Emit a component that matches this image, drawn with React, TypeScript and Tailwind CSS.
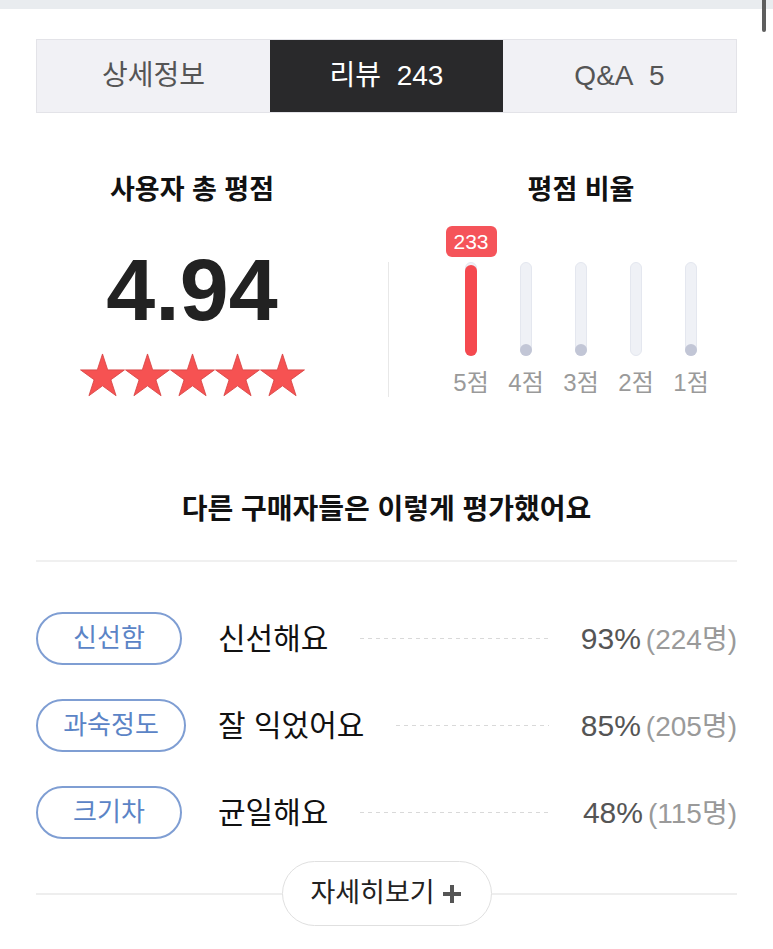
import React from "react";

const FONT = { fontFamily: '"Liberation Sans", "Noto Sans CJK KR", sans-serif' };

function Star() {
  return (
    <svg width="45" height="45" viewBox="0.3 0.3 23.4 23.4">
      <polygon
        points="12,0.8 14.69,9.09 23.41,9.09 16.36,14.22 19.05,22.51 12,17.38 4.95,22.51 7.64,14.22 0.59,9.09 9.31,9.09"
        fill="#f65252"
        stroke="#d84444"
        strokeWidth="0.45"
        strokeLinejoin="round"
      />
    </svg>
  );
}

const bars = [
  { label: "5점", count: 233, active: true, dot: false },
  { label: "4점", count: 5, active: false, dot: true },
  { label: "3점", count: 3, active: false, dot: true },
  { label: "2점", count: 0, active: false, dot: false },
  { label: "1점", count: 2, active: false, dot: true },
];

const rows = [
  { tag: "신선함", text: "신선해요", pct: "93%", n: "(224명)", wide: false },
  { tag: "과숙정도", text: "잘 익었어요", pct: "85%", n: "(205명)", wide: true },
  { tag: "크기차", text: "균일해요", pct: "48%", n: "(115명)", wide: false },
];

export default function App() {
  return (
    <div className="relative w-[773px] h-[949px] overflow-hidden bg-white" style={FONT}>
      <div className="h-[9px] bg-[#e9ecef]" />
      <div className="absolute right-[7px] top-0 w-[4px] h-[32px] rounded-b-full bg-[#5e5e5e]" />

      <div className="px-[36px]">
        {/* Tabs */}
        <div className="mt-[30px] flex h-[74px] border border-[#e3e3e8]">
          <div className="flex flex-1 items-center justify-center bg-[#f1f1f5] text-[28px] text-[#555]">
            상세정보
          </div>
          <div className="flex flex-1 items-center justify-center bg-[#29292b] text-[28px] text-white">
            리뷰&nbsp;&nbsp;243
          </div>
          <div className="flex flex-1 items-center justify-center bg-[#f1f1f5] text-[28px] text-[#555]">
            Q&amp;A&nbsp;&nbsp;5
          </div>
        </div>

        {/* Rating summary */}
        <div className="mt-[62px] flex">
          <div className="flex w-[312px] flex-col items-center">
            <div className="text-[27px] font-bold leading-[30px] text-[#111]">사용자 총 평점</div>
            <div className="mt-[41px] text-[88px] font-bold leading-none text-[#222]">4.94</div>
            <div className="mt-[19px] flex">
              <Star />
              <Star />
              <Star />
              <Star />
              <Star />
            </div>
          </div>
          <div className="ml-[40px] mt-[87px] h-[135px] w-px bg-[#e8e8e8]" />
          <div className="flex flex-1 flex-col items-center pl-[36px]">
            <div className="text-[27px] font-bold leading-[30px] text-[#111]">평점 비율</div>
            <div className="mt-[21px] flex">
              {bars.map((b) => (
                <div key={b.label} className="flex w-[55px] flex-col items-center">
                  {b.active ? (
                    <div className="flex h-[31px] w-[51px] items-center justify-center rounded-[6px] bg-[#f5545a] text-[21px] text-white">
                      {b.count}
                    </div>
                  ) : (
                    <div className="h-[31px]" />
                  )}
                  <div className="relative mt-[5px] h-[94px] w-[12px] rounded-full border border-[#e4e7ef] bg-[#eff1f6]">
                    {b.active && (
                      <div className="absolute inset-x-[-1px] bottom-[-1px] top-[2px] rounded-full bg-[#f5494f]" />
                    )}
                    {b.dot && (
                      <div className="absolute bottom-[-1px] left-[-1px] h-[12px] w-[12px] rounded-full bg-[#c2c6d6]" />
                    )}
                  </div>
                  <div className="mt-[14px] text-[24px] leading-[26px] text-[#9a9a9a]">{b.label}</div>
                </div>
              ))}
            </div>
          </div>
        </div>

        {/* Others' evaluation */}
        <div className="mt-[94px] text-center text-[28px] font-bold leading-[36px] text-[#111]">
          다른 구매자들은 이렇게 평가했어요
        </div>
        <div className="mt-[32px] h-[2px] bg-[#f0f0f0]" />

        <div className="mt-[50px] flex flex-col gap-[34px]">
          {rows.map((r) => (
            <div key={r.tag} className="flex h-[53px] items-center">
              <div className="w-[182px] shrink-0">
                <div
                  className={
                    r.wide
                      ? "flex h-[53px] w-[150px] items-center justify-center rounded-full border-2 border-[#7f9ed3] text-[26px] text-[#5b84c6]"
                      : "flex h-[53px] w-[146px] items-center justify-center rounded-full border-2 border-[#7f9ed3] text-[26px] text-[#5b84c6]"
                  }
                >
                  {r.tag}
                </div>
              </div>
              <div className="text-[30px] text-[#111]">{r.text}</div>
              <div className="mx-[32px] h-px flex-1 bg-[repeating-linear-gradient(to_right,#d9d9d9_0_4px,transparent_4px_8px)]" />
              <div className="flex items-baseline">
                <span className="text-[30px] text-[#555]">{r.pct}</span>
                <span className="ml-[5px] text-[28px] text-[#9a9a9a]">{r.n}</span>
              </div>
            </div>
          ))}
        </div>

        <div className="mt-[22px] flex items-center">
          <div className="h-[2px] flex-1 bg-[#eeeeee]" />
          <div className="flex h-[65px] w-[210px] items-center justify-center gap-[6px] rounded-full border border-[#e0e0e0] bg-white">
            <span className="text-[27px] text-[#222]">자세히보기</span>
            <svg width="22" height="22" viewBox="0 0 22 22">
              <path d="M11 2 V20 M2 11 H20" stroke="#555" strokeWidth="4" />
            </svg>
          </div>
          <div className="h-[2px] flex-1 bg-[#eeeeee]" />
        </div>
      </div>
    </div>
  );
}
